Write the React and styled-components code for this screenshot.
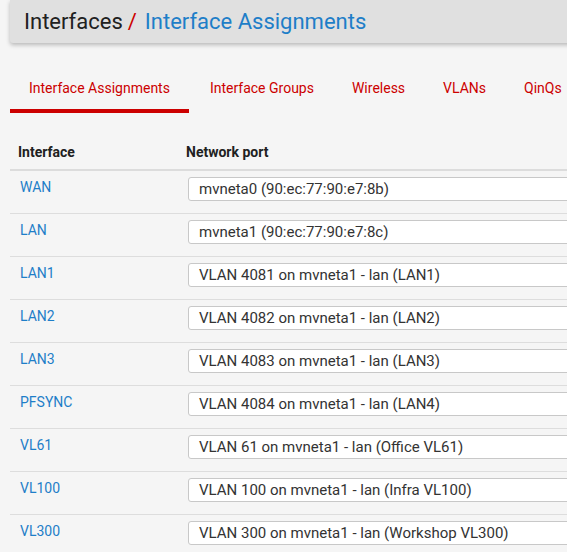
import React from "react";
import styled, { createGlobalStyle } from "styled-components";

const rows = [
  ["WAN", "mvneta0 (90:ec:77:90:e7:8b)"],
  ["LAN", "mvneta1 (90:ec:77:90:e7:8c)"],
  ["LAN1", "VLAN 4081 on mvneta1 - lan (LAN1)"],
  ["LAN2", "VLAN 4082 on mvneta1 - lan (LAN2)"],
  ["LAN3", "VLAN 4083 on mvneta1 - lan (LAN3)"],
  ["PFSYNC", "VLAN 4084 on mvneta1 - lan (LAN4)"],
  ["VL61", "VLAN 61 on mvneta1 - lan (Office VL61)"],
  ["VL100", "VLAN 100 on mvneta1 - lan (Infra VL100)"],
  ["VL300", "VLAN 300 on mvneta1 - lan (Workshop VL300)"],
];

const tabs = ["Interface Assignments", "Interface Groups", "Wireless", "VLANs", "QinQs"];

const GlobalStyle = createGlobalStyle`
  body {
    margin: 0;
    background: #f5f5f5;
    font-family: Roboto, "Liberation Sans", sans-serif;
    overflow: hidden;
  }
`;

const Page = styled.div`
  width: 567px;
  height: 552px;
  overflow: hidden;
  padding-left: 10px;
  box-sizing: border-box;
`;

const Wide = styled.div`
  width: 700px;
`;

const Header = styled.div`
  height: 43px;
  background: #e0e0e0;
  box-shadow: 0 2px 4px rgba(0, 0, 0, 0.25);
  border-radius: 0 0 0 3px;
  display: flex;
  align-items: center;
  padding-left: 14px;
  font-size: 22px;
  color: #212121;
`;

const Slash = styled.span`
  color: #cc0000;
  margin: 0 8px 0 5px;
`;

const Crumb = styled.span`
  color: #1e7ec8;
`;

const Tabs = styled.div`
  display: flex;
  margin-top: 23px;
`;

const Tab = styled.div`
  padding: 14px 19px 13px;
  font-size: 14px;
  color: #cc0000;
  border-bottom: 4px solid ${(p) => (p.$active ? "#cc0000" : "transparent")};
  margin-right: ${(p) => (p.$active ? "2px" : "0")};
`;

const Table = styled.div`
  margin-top: 21px;
`;

const HeadRow = styled.div`
  display: grid;
  grid-template-columns: 176px 1fr;
  border-bottom: 2px solid #dcdcdc;
  font-size: 14px;
  font-weight: 700;
  color: #212121;
  padding: 10px 0 9px;
`;

const Cell = styled.div`
  padding-left: 8px;
`;

const Row = styled.div`
  display: grid;
  grid-template-columns: 178px 1fr;
  height: 42px;
  border-bottom: 1px solid #dddddd;
  align-items: start;
`;

const Name = styled.a`
  color: #1e7ec8;
  font-size: 14px;
  padding: 8px 0 0 10px;
`;

const Select = styled.div`
  margin-top: 6px;
  height: 22px;
  border: 1px solid #c8c8c8;
  border-radius: 3px;
  background: #fff;
  font-size: 15px;
  color: #333;
  display: flex;
  align-items: center;
  padding-left: 10px;
`;

export default function App() {
  return (
    <Page>
      <GlobalStyle />
      <Wide>
        <Header>
          Interfaces<Slash>/</Slash>
          <Crumb>Interface Assignments</Crumb>
        </Header>
        <Tabs>
          {tabs.map((t, i) => (
            <Tab key={t} $active={i === 0}>{t}</Tab>
          ))}
        </Tabs>
        <Table>
          <HeadRow>
            <Cell>Interface</Cell>
            <div>Network port</div>
          </HeadRow>
          {rows.map(([n, p]) => (
            <Row key={n}>
              <Name>{n}</Name>
              <Select>{p}</Select>
            </Row>
          ))}
        </Table>
      </Wide>
    </Page>
  );
}
